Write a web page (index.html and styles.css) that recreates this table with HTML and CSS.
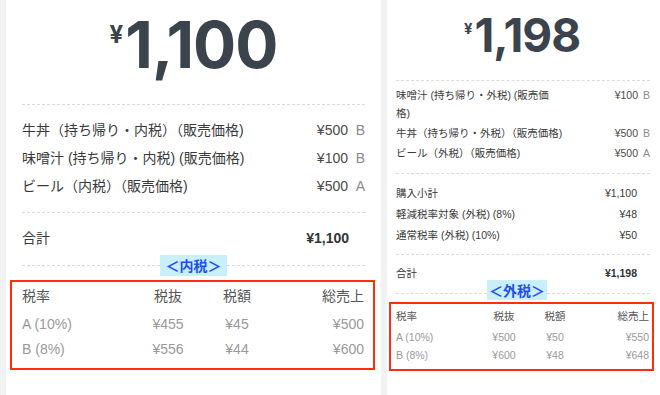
FILE: index.html
```html
<!DOCTYPE html>
<html lang="ja">
<head>
<meta charset="utf-8">
<title>Receipts</title>
<link rel="stylesheet" href="styles.css">
</head>
<body>
<div class="stage">
  <section class="receipt lg">
    <div class="hero"><span class="yen">¥</span><span class="amount">1,100</span></div>
    <div class="rule"></div>
    <div class="items">
      <div class="row"><span class="name">牛丼（持ち帰り・内税）（販売価格)</span><span class="price">¥500</span><span class="tag">B</span></div>
      <div class="row"><span class="name">味噌汁 (持ち帰り・内税) (販売価格)</span><span class="price">¥100</span><span class="tag">B</span></div>
      <div class="row"><span class="name">ビール（内税）（販売価格)</span><span class="price">¥500</span><span class="tag">A</span></div>
    </div>
    <div class="rule"></div>
    <div class="total"><span class="name">合計</span><span class="sum">¥1,100</span></div>
    <div class="labeled"><span class="line l"></span><span class="label">＜内税＞</span><span class="line r"></span></div>
    <div class="taxbox">
      <div class="tgrid head"><span>税率</span><span class="c">税抜</span><span class="c">税額</span><span class="e">総売上</span></div>
      <div class="tgrid val"><span>A (10%)</span><span class="c">¥455</span><span class="c">¥45</span><span class="e">¥500</span></div>
      <div class="tgrid val"><span>B (8%)</span><span class="c">¥556</span><span class="c">¥44</span><span class="e">¥600</span></div>
    </div>
  </section>

  <section class="receipt sm">
    <div class="hero"><span class="yen">¥</span><span class="amount">1,198</span></div>
    <div class="rule"></div>
    <div class="items">
      <div class="row"><span class="name">味噌汁 (持ち帰り・外税) (販売価<br>格)</span><span class="price">¥100</span><span class="tag">B</span></div>
      <div class="row"><span class="name">牛丼（持ち帰り・外税）（販売価格)</span><span class="price">¥500</span><span class="tag">B</span></div>
      <div class="row"><span class="name">ビール（外税）（販売価格)</span><span class="price">¥500</span><span class="tag">A</span></div>
    </div>
    <div class="rule"></div>
    <div class="summary">
      <div class="srow"><span>購入小計</span><span>¥1,100</span></div>
      <div class="srow"><span>軽減税率対象 (外税) (8%)</span><span>¥48</span></div>
      <div class="srow"><span>通常税率 (外税) (10%)</span><span>¥50</span></div>
    </div>
    <div class="rule"></div>
    <div class="total"><span class="name">合計</span><span class="sum">¥1,198</span></div>
    <div class="labeled"><span class="line l"></span><span class="label">＜外税＞</span><span class="line r"></span></div>
    <div class="taxbox">
      <div class="tgrid head"><span>税率</span><span class="c">税抜</span><span class="c">税額</span><span class="e">総売上</span></div>
      <div class="tgrid val"><span>A (10%)</span><span class="c">¥500</span><span class="c">¥50</span><span class="e">¥550</span></div>
      <div class="tgrid val"><span>B (8%)</span><span class="c">¥600</span><span class="c">¥48</span><span class="e">¥648</span></div>
    </div>
  </section>
</div>
</body>
</html>
```

FILE: styles.css
```css
* { box-sizing: border-box; }
html, body { margin: 0; padding: 0; }
body {
  background: #f1f2f4;
  font-family: "Liberation Sans", "Noto Sans CJK JP", sans-serif;
  color: #3a3a3a;
  overflow: hidden;
  width: 660px;
  height: 395px;
}
.stage {
  display: flex;
  gap: 6px;
  padding-left: 6px;
  height: 395px;
}
.receipt {
  background: #fff;
  flex: none;
  height: 395px;
}
.lg { width: 375px; }
.sm { width: 273px; }

/* hero amount */
.hero {
  display: flex;
  justify-content: center;
  align-items: flex-start;
  color: #3b444c;
  font-family: "Inter", "Noto Sans", sans-serif;
  font-weight: 700;
}
.lg .hero { height: 104px; padding-top: 13px; }
.lg .amount { font-size: 64px; line-height: 64px; letter-spacing: -1px; }
.lg .yen { font-size: 24px; line-height: 24px; margin-top: 10px; margin-right: 2px; }

.sm .hero { height: 80px; padding-top: 12px; padding-right: 3px; }
.sm .amount { font-size: 46px; line-height: 46px; letter-spacing: -1px; }
.sm .yen { font-size: 15px; line-height: 15px; margin-top: 9px; margin-right: 2px; }

/* dividers */
.rule { border-top: 1px dashed #dcdcdc; }
.lg .rule { margin: 0 16px; }
.sm .rule { margin: 0 10px 0 9px; }

/* item rows */
.row, .total, .srow { display: flex; align-items: flex-start; }
.row .name { flex: 0 1 auto; white-space: nowrap; }
.row .price { margin-left: auto; color: #4a4a4a; white-space: nowrap; }
.row .tag { text-align: right; color: #8a8a8a; flex: none; }
.total .sum { margin-left: auto; font-weight: 700; color: #333; }

.lg .items { padding: 11px 16px 12px; font-size: 14px; line-height: 28px; }
.lg .row .tag { width: 17px; }
.lg .total { padding: 11px 32px 3px 16px; font-size: 14px; line-height: 28px; }

.sm .items {
  padding: 5px 10px 11px 9px;
  font-size: 10.5px;
  line-height: 18px;
  display: flex;
  flex-direction: column;
  gap: 2px;
}
.sm .row .tag { width: 12px; }
.sm .summary { padding: 9px 23px 8px 9px; font-size: 10.5px; line-height: 21px; }
.srow span:last-child { margin-left: auto; }
.sm .total { padding: 11px 23px 0 9px; font-size: 10.5px; line-height: 14px; }

/* labeled divider */
.labeled { display: flex; align-items: flex-start; }
.labeled .line { border-top: 1px dashed #dcdcdc; flex: 1 1 0; }
.label {
  background: #c9eefc;
  color: #1f4ef5;
  font-family: "Noto Sans CJK JP", sans-serif;
  font-weight: 700;
  text-align: center;
  flex: none;
}
.lg .labeled { margin: 0 16px; height: 21px; }
.lg .labeled .line { margin-top: 10px; }
.lg .label { width: 67px; height: 21px; font-size: 14px; line-height: 21px; }

.sm .labeled { margin: 0 10px 0 9px; height: 20px; }
.sm .labeled .line { margin-top: 13px; }
.sm .labeled .l { flex-grow: 91; }
.sm .labeled .r { flex-grow: 103; }
.sm .label { width: 60px; height: 20px; font-size: 14px; line-height: 20px; }

/* tax table box */
.taxbox { border: 2px solid #ff2d0d; }
.lg .taxbox { margin: 4px 6px 0 4px; padding: 2px 9px 6px 10px; font-size: 14px; line-height: 25px; }
.lg .tgrid { display: grid; grid-template-columns: 106px 80px 58px 98px; }
.lg .head { margin-bottom: 3px; }

.sm .taxbox { margin: 2px 6px 0 2px; padding: 3px 3px 5px 5px; font-size: 10.5px; line-height: 18px; }
.sm .tgrid { display: grid; grid-template-columns: 78px 60px 42px 73px; }
.sm .head { margin-bottom: 3px; }

.tgrid .c { text-align: center; }
.tgrid .e { text-align: right; }
.head { color: #555; }
.val { color: #999; }
```
